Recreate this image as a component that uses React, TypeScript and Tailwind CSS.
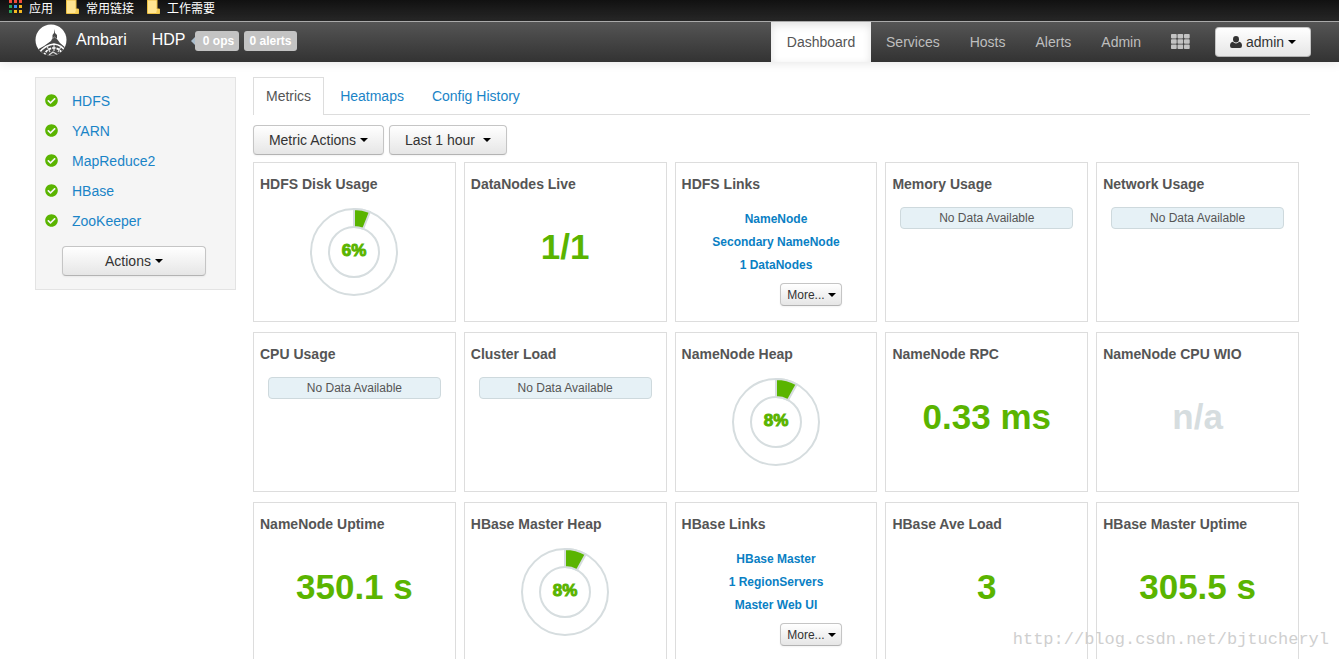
import React from 'react'
import { FaCheckCircle } from 'react-icons/fa'

type Widget = {
  title: string
  kind: 'pie' | 'value' | 'empty' | 'links'
  percent?: number
  value?: string
  links?: string[]
}

const widgets: Widget[] = [
  { title: 'HDFS Disk Usage', kind: 'pie', percent: 6 },
  { title: 'DataNodes Live', kind: 'value', value: '1/1' },
  { title: 'HDFS Links', kind: 'links', links: ['NameNode', 'Secondary NameNode', '1 DataNodes'] },
  { title: 'Memory Usage', kind: 'empty' },
  { title: 'Network Usage', kind: 'empty' },
  { title: 'CPU Usage', kind: 'empty' },
  { title: 'Cluster Load', kind: 'empty' },
  { title: 'NameNode Heap', kind: 'pie', percent: 8 },
  { title: 'NameNode RPC', kind: 'value', value: '0.33 ms' },
  { title: 'NameNode CPU WIO', kind: 'value', value: 'n/a' },
  { title: 'NameNode Uptime', kind: 'value', value: '350.1 s' },
  { title: 'HBase Master Heap', kind: 'pie', percent: 8 },
  { title: 'HBase Links', kind: 'links', links: ['HBase Master', '1 RegionServers', 'Master Web UI'] },
  { title: 'HBase Ave Load', kind: 'value', value: '3' },
  { title: 'HBase Master Uptime', kind: 'value', value: '305.5 s' },
]

const services = ['HDFS', 'YARN', 'MapReduce2', 'HBase', 'ZooKeeper']

const appColors = ['#f04a3a', '#f04a3a', '#f04a3a', '#2ba45a', '#3f8cf5', '#f5b921', '#2ba45a', '#f5b921', '#f5b921']

const button =
  'flex items-center justify-center rounded border border-[#c5c5c5] border-b-[#b3b3b3] bg-linear-to-b from-white to-[#e6e6e6] text-[#333] shadow-xs'

function Caret() {
  return <span className="border-x-4 border-t-4 border-x-transparent border-t-black" />
}

function Logo() {
  return (
    <svg width="32" height="32" viewBox="0 0 32 32" aria-hidden="true">
      <defs>
        <clipPath id="disc">
          <circle cx="16" cy="16" r="15.5" />
        </clipPath>
      </defs>
      <circle cx="16" cy="16" r="15.5" fill="#fff" />
      <g clipPath="url(#disc)">
        <path d="M19.5 5 L20 9 L22 11 V15 L25 19 L32 25 V32 H0 V27 L9 22 L16 17 L17.500 14 V11 L19 9 Z" fill="#484848" />
        <path d="M4 29 Q10 21 19 20 Q27 21 31 28" fill="none" stroke="#fff" strokeWidth="1.500" />
        <path d="M9 32 Q11 24.500 19 24 Q26 24.500 28 32" fill="none" stroke="#fff" strokeWidth="1.800" strokeDasharray="3 1" />
        <path d="M19 21 V27 M12 22.500 L15 28 M26 22.500 L23 28 M14 31 L18 28 L23 31" fill="none" stroke="#ddd" strokeWidth="1.200" />
        <path d="M17 15 L19.500 13 L22 15" fill="none" stroke="#999" />
      </g>
    </svg>
  )
}

function UserIcon() {
  return (
    <svg width="12" height="12" viewBox="0 0 12 12" fill="#333" aria-hidden="true">
      <ellipse cx="6" cy="3.300" rx="3" ry="3.300" />
      <path d="M2.800 5.800 Q6 9 9.200 5.800 Q12 6.400 12 9.800 Q12 12 10 12 H2 Q0 12 0 9.800 Q0 6.400 2.800 5.800 Z" />
    </svg>
  )
}

function Folder() {
  return (
    <svg width="13" height="14" viewBox="0 0 13 14" aria-hidden="true">
      <path d="M0.500 0 H10 V9 H12.500 V13.500 H0.500 Z" fill="#ffe592" stroke="#edc043" />
      <path d="M10 9.500 H12.500 V13.500 H9 Z" fill="#f6cf58" />
    </svg>
  )
}

function BookmarkBar() {
  return (
    <div className="flex h-[21px] items-start bg-linear-to-b from-[#111] to-[#282828] pl-[9px] text-xs leading-4 text-white font-['Noto_Sans_CJK_SC',sans-serif]">
      <a href="#" className="flex gap-[7px]">
        <svg width="13" height="14" viewBox="0 0 13 14" aria-hidden="true">
          {appColors.map((color, i) => (
            <rect key={i} x={(i % 3) * 5} y={Math.floor(i / 3) * 5} width="3" height="3" fill={color} />
          ))}
        </svg>
        应用
      </a>
      <a href="#" className="ml-[13px] flex gap-[7px]"><Folder />常用链接</a>
      <a href="#" className="ml-[13px] flex gap-[7px]"><Folder />工作需要</a>
    </div>
  )
}

function Navbar() {
  return (
    <header className="relative flex h-[41px] items-stretch border-t border-[#aaa] bg-linear-to-b from-[#555] to-[#333] pr-7 pl-[35px] shadow-[0_1px_10px_rgba(0,0,0,0.1)]">
      <a href="#" className="flex items-center gap-[9px] pb-1 text-base text-white">
        <Logo />
        Ambari
      </a>
      <a href="#" className="ml-[25px] flex items-center pb-1 text-base text-white">HDP</a>
      <div className="flex items-center gap-[5px] pb-[2px] pl-[6px] text-xs font-bold text-white">
        <div className="flex items-center">
          <span className="border-y-4 border-r-4 border-y-transparent border-r-[#a9bccb]" />
          <button className="h-5 w-11 rounded-[3px] bg-[#c3c3c3] pl-[2px]">0 ops</button>
        </div>
        <button className="h-5 rounded-[3px] bg-[#c3c3c3] px-[5px]">0 alerts</button>
      </div>
      <nav className="ml-auto flex text-[#bebebe]">
        <a href="#" className="flex min-w-[100px] items-center justify-center bg-white px-[15px] text-[#555] shadow-[inset_0_3px_8px_rgba(0,0,0,0.125)]">Dashboard</a>
        {['Services', 'Hosts', 'Alerts', 'Admin'].map((item) => (
          <a key={item} href="#" className="flex items-center px-[15px]">{item}</a>
        ))}
        <button aria-label="Views" className="mr-[10px] px-[15px] pb-[2px]">
          <svg width="19" height="15" viewBox="0 0 19 15" fill="#c3c3c3">
            {[0, 6.5, 13].map((x) => [0, 5.3, 10.6].map((y) => <rect key={`${x}-${y}`} x={x} y={y} width="5.7" height="4.400" rx="0.800" />))}
          </svg>
        </button>
      </nav>
      <button className={`${button} mt-[5px] h-[30px] w-24 gap-1 text-sm`}>
        <UserIcon />
        admin
        <Caret />
      </button>
    </header>
  )
}

function Sidebar() {
  return (
    <aside className="w-[201px] shrink-0 self-start border border-[#e3e3e3] bg-[#f5f5f5] pt-2 pb-[13px]">
      <ul>
        {services.map((name) => (
          <li key={name} className="flex h-[30px] items-center gap-[14px] pl-[9px]">
            <span className="pb-[2px]">
              <FaCheckCircle size={13} className="text-[#5ab400]" />
            </span>
            <a href="#" className="text-[#1a84c7]">{name}</a>
          </li>
        ))}
      </ul>
      <button className={`${button} mt-[10px] ml-[26px] h-[30px] w-36 gap-1`}>
        Actions
        <Caret />
      </button>
    </aside>
  )
}

function Pie({ percent }: { percent: number }) {
  const angle = (percent / 100) * Math.PI * 2
  const sin = Math.sin(angle)
  const cos = Math.cos(angle)
  return (
    <svg width="90" height="90" viewBox="-45 -45 90 90" className="mx-auto mt-[13px] block">
      <circle r="43" fill="none" stroke="#d6dddf" strokeWidth="2" />
      <circle r="25" fill="none" stroke="#d6dddf" strokeWidth="2" />
      <path
        d={`M0 -43 A43 43 0 0 1 ${43 * sin} ${-43 * cos} L${25 * sin} ${-25 * cos} A25 25 0 0 0 0 -25 Z`}
        fill="#5ab400"
        stroke="#d6dddf"
        strokeWidth="2"
      />
      <text y="4" textAnchor="middle" fontSize="17" fontWeight="bold" fill="#5ab400" stroke="#5ab400">
        {percent}%
      </text>
    </svg>
  )
}

function Card({ widget }: { widget: Widget }) {
  return (
    <section className="h-40 border border-[#ddd] bg-white px-[6px] pt-[11px]">
      <h2 className="text-sm leading-5 font-bold text-[#555]">{widget.title}</h2>
      {widget.kind === 'pie' && <Pie percent={widget.percent ?? 0} />}
      {widget.kind === 'value' && (
        <p className={`mt-8 text-center text-[35px] leading-[42px] font-bold ${widget.value === 'n/a' ? 'text-[#d6dddf]' : 'text-[#5ab400]'}`}>
          {widget.value}
        </p>
      )}
      {widget.kind === 'empty' && (
        <p className="mx-2 mt-[13px] rounded border border-[#ced9dd] bg-[#e6f1f6] text-center text-xs leading-5 text-[#555]">
          No Data Available
        </p>
      )}
      {widget.kind === 'links' && (
        <div className="mt-[14px] text-xs font-bold">
          {widget.links?.map((link) => (
            <a key={link} href="#" className="block text-center leading-[23px] text-[#0a7fc4]">{link}</a>
          ))}
          <button className={`${button} mt-[6px] mr-7 ml-auto h-[23px] w-[62px] gap-[3px] font-normal`}>
            More...
            <Caret />
          </button>
        </div>
      )}
    </section>
  )
}

export default function App() {
  return (
    <div className="relative h-screen overflow-hidden bg-white text-sm leading-5 text-[#333] font-['Liberation_Sans',Arial,sans-serif]">
      <BookmarkBar />
      <Navbar />
      <div className="flex gap-[17px] pt-[15px] pr-[29px] pl-[35px]">
        <Sidebar />
        <main className="min-w-0 flex-1">
          <nav className="flex h-[38px] border-b border-[#ddd]">
            <a href="#" className="-mb-px border border-b-0 border-[#ddd] bg-white px-3 pt-2 text-[#555]">Metrics</a>
            <a href="#" className="ml-1 px-3 pt-[9px] text-[#1a84c7]">Heatmaps</a>
            <a href="#" className="ml-1 px-3 pt-[9px] text-[#1a84c7]">Config History</a>
          </nav>
          <div className="mt-[10px] flex gap-[5px]">
            <button className={`${button} h-[30px] w-[131px] gap-1`}>
              Metric Actions
              <Caret />
            </button>
            <button className={`${button} h-[30px] w-[118px] gap-2`}>
              Last 1 hour
              <Caret />
            </button>
          </div>
          <div className="mt-[7px] mr-[11px] grid grid-cols-5 gap-x-2 gap-y-[10px]">
            {widgets.map((widget) => (
              <Card key={widget.title} widget={widget} />
            ))}
          </div>
        </main>
      </div>
      <span className="pointer-events-none absolute right-[10px] bottom-[7px] text-[17px] leading-6 text-[#cfcfcf] font-['Liberation_Mono',monospace]">
        http://blog.csdn.net/bjtucheryl
      </span>
    </div>
  )
}
